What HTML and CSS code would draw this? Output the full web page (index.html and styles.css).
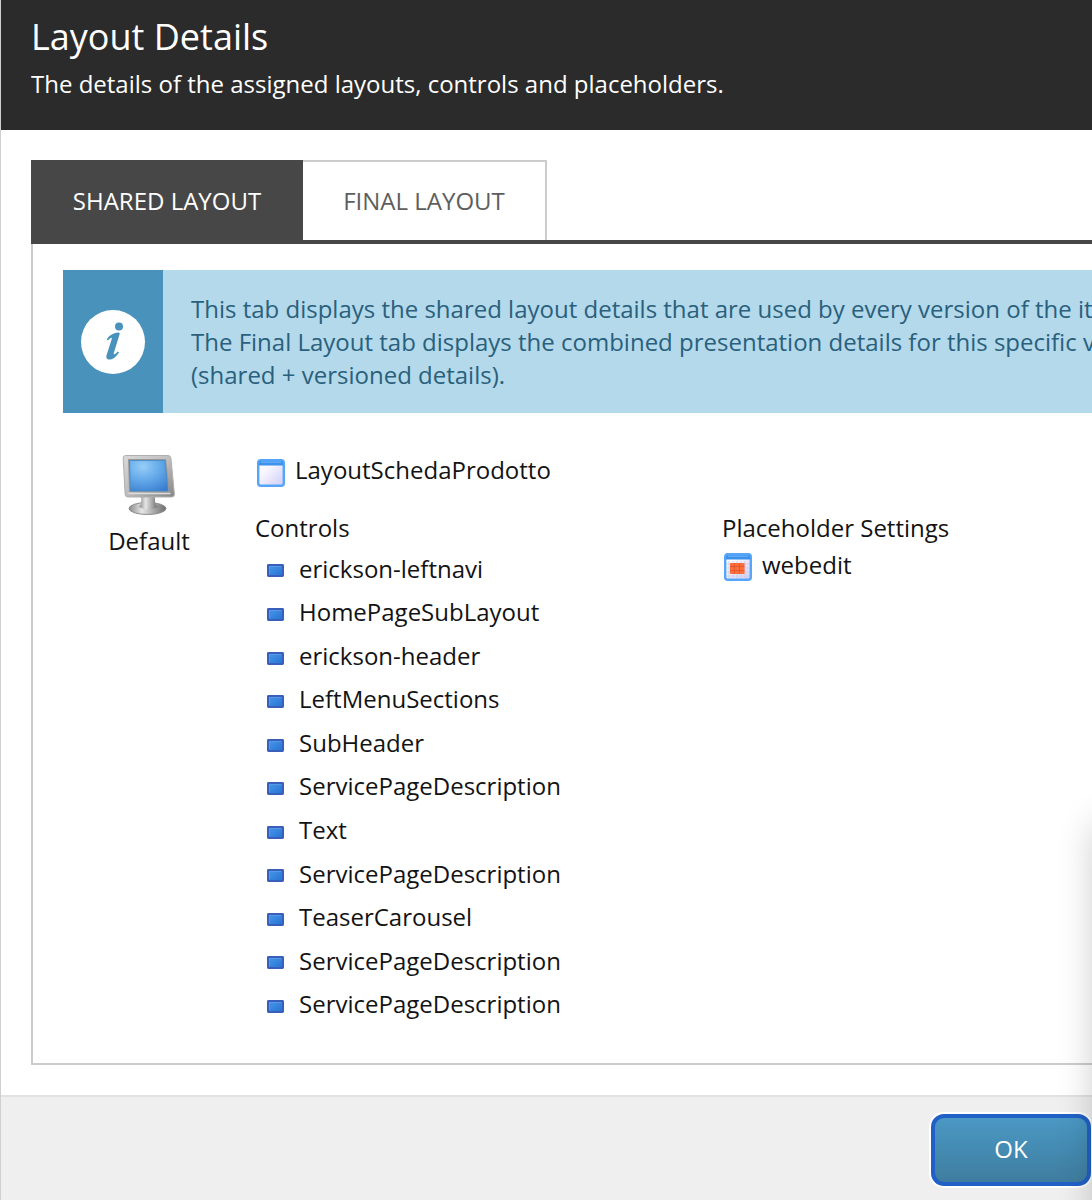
FILE: index.html
```html
<!DOCTYPE html>
<html lang="en">
<head>
<meta charset="utf-8">
<title>Layout Details</title>
<link rel="stylesheet" href="styles.css">
</head>
<body>
<svg class="defs" width="0" height="0" aria-hidden="true">
  <defs>
    <radialGradient id="screen" cx=".35" cy=".2" r="1"><stop offset="0" stop-color="#96cef8"/><stop offset=".45" stop-color="#64a9e9"/><stop offset="1" stop-color="#3277cc"/></radialGradient>
    <linearGradient id="metal" x1="0" y1="0" x2="1" y2="1"><stop offset="0" stop-color="#d9d9d9"/><stop offset=".5" stop-color="#bdbdbd"/><stop offset="1" stop-color="#858585"/></linearGradient>
    <linearGradient id="foot" x1="0" y1="0" x2="1" y2="0"><stop offset="0" stop-color="#8a8a8a"/><stop offset=".35" stop-color="#e6e6e6"/><stop offset="1" stop-color="#6c6c6c"/></linearGradient>
    <linearGradient id="pane" x1="0" y1="0" x2="1" y2="1"><stop offset="0" stop-color="#fff"/><stop offset=".35" stop-color="#f7f6ff"/><stop offset="1" stop-color="#cfccf6"/></linearGradient>
    <linearGradient id="chip" x1="0" y1="0" x2="1" y2="1"><stop offset="0" stop-color="#4a98ea"/><stop offset="1" stop-color="#2472d2"/></linearGradient>
    <symbol id="control" viewBox="0 0 17 13"><rect x="1" y="1" width="15" height="11" rx=".4" fill="url(#chip)" stroke="#3a5fbb" stroke-width="2"/><path d="M2.500 10V2.500H14" fill="none" stroke="#5a9ce8" stroke-width=".8"/></symbol>
    <symbol id="window" viewBox="0 0 28 28"><rect x="1.200" y="1.200" width="25.600" height="25.600" rx="2.600" fill="url(#pane)" stroke="#55a5fa" stroke-width="2.400"/><path d="M2 6.500V3.500Q2 2 3.500 2h21Q26 2 26 3.500v3z" fill="#3e91ea"/><path d="M4 3.200h20" stroke="#67b1fb" stroke-width="1.300"/></symbol>
  </defs>
</svg>
<div class="dialog">
  <header class="header">
    <h1 class="title">Layout Details</h1>
    <p class="subtitle">The details of the assigned layouts, controls and placeholders.</p>
  </header>
  <main class="main">
    <nav class="tabs">
      <a class="tab tab-active">SHARED LAYOUT</a>
      <a class="tab">FINAL LAYOUT</a>
    </nav>
    <section class="panel">
      <div class="notice">
        <div class="notice-side">
          <span class="notice-icon"><svg width="64" height="64" viewBox="0 0 64 64"><circle cx="38" cy="16.500" r="4" fill="#4892bb"/><path d="M25.800 29.500C28 25 33 22.600 37.500 22.400 38.800 22.600 38.900 23.500 38.500 24.500L32.800 43C32.200 45 33.600 45 36.800 41.500L38 42.500C35.200 47.200 31.700 49.600 28.500 49.600 25.600 49.600 24.800 47.500 25.600 45L30.600 29.500C31.400 26.800 29.800 27.200 27 30.500Z" fill="#4892bb"/></svg></span>
        </div>
        <p class="notice-text">This tab displays the shared layout details that are used by every version of the item.<br>The Final Layout tab displays the combined presentation details for this specific version<br>(shared + versioned details).</p>
      </div>
      <div class="details">
        <div class="device">
          <svg class="monitor" width="54" height="62" viewBox="0 0 54 62">
            <ellipse cx="25.500" cy="54.500" rx="18.500" ry="6" fill="url(#foot)" stroke="#8b8b8b"/>
            <path d="M18 43h15v4q0 4 3 6-9 5-19 0 3-3 2-10z" fill="url(#foot)"/>
            <path d="M3.500 1.500h42.500q2.500 0 2.900 2.500l3.500 36q.2 3-2.600 3H6q-2.800 0-2.900-3L1.200 4Q1.100 1.500 3.500 1.500z" fill="url(#metal)" stroke="#b0b0b0"/>
            <path d="M6 5h38l3.700 33H7z" fill="#999"/>
            <path d="M7.500 6.500h35.500l3 30.500H8.500z" fill="url(#screen)" stroke="#4688c8" stroke-width=".8"/>
            <path d="M6.500 39.500h42" stroke="#dcdcdc" stroke-width="1.500"/>
          </svg>
          <span>Default</span>
        </div>
        <div class="layout">
          <div class="layout-name"><svg width="28" height="28"><use href="#window"/></svg><span>LayoutSchedaProdotto</span></div>
          <div class="columns">
            <div class="controls">
              <h2 class="heading">Controls</h2>
              <ul class="control-list">
                <li><svg width="17" height="13"><use href="#control"/></svg>erickson-leftnavi</li>
                <li><svg width="17" height="13"><use href="#control"/></svg>HomePageSubLayout</li>
                <li><svg width="17" height="13"><use href="#control"/></svg>erickson-header</li>
                <li><svg width="17" height="13"><use href="#control"/></svg>LeftMenuSections</li>
                <li><svg width="17" height="13"><use href="#control"/></svg>SubHeader</li>
                <li><svg width="17" height="13"><use href="#control"/></svg>ServicePageDescription</li>
                <li><svg width="17" height="13"><use href="#control"/></svg>Text</li>
                <li><svg width="17" height="13"><use href="#control"/></svg>ServicePageDescription</li>
                <li><svg width="17" height="13"><use href="#control"/></svg>TeaserCarousel</li>
                <li><svg width="17" height="13"><use href="#control"/></svg>ServicePageDescription</li>
                <li><svg width="17" height="13"><use href="#control"/></svg>ServicePageDescription</li>
              </ul>
            </div>
            <div class="placeholders">
              <h2 class="heading">Placeholder Settings</h2>
              <div class="placeholder"><svg width="28" height="28" viewBox="0 0 28 28"><use href="#window"/><path d="M5 8v17M9 8v17M13 8v17M17 8v17M21 8v17M3 11h22M3 15h22M3 19h22M3 23h22" stroke="#c9c9ea" stroke-width=".8"/><rect x="6" y="10" width="14.500" height="11" fill="#fb6e3e"/><path d="M10.500 10v11M15.500 10v11M6 13.500h14.500M6 17.500h14.500" stroke="#e4562c" stroke-width=".9"/></svg><span>webedit</span></div>
            </div>
          </div>
        </div>
      </div>
    </section>
  </main>
  <footer class="footer"><button class="ok">OK</button></footer>
  <div class="side-shadow"></div>
</div>
</body>
</html>
```
FILE: styles.css
```css
* { box-sizing: border-box; }
body, h1, h2, p, ul { margin: 0; padding: 0; }
body {
  height: 1200px;
  overflow: hidden;
  background: #fff;
  color: #131313;
  font: 24px/33px "Open Sans", sans-serif;
}
svg { display: block; flex: none; }
.defs { position: absolute; }
.dialog {
  position: relative;
  display: flex;
  flex-direction: column;
  height: 1200px;
  overflow: hidden;
  border-left: 1px solid #d0d0d0;
}
.header {
  height: 130px;
  padding: 12px 30px 0;
  background: #2b2b2b;
  color: #fff;
}
.title { font-size: 36px; line-height: 50px; font-weight: 400; }
.subtitle { margin-top: 5px; white-space: nowrap; }
.main { height: 965px; padding: 30px 0 30px 30px; display: flex; flex-direction: column; }
.tabs { display: flex; height: 84px; border-bottom: 4px solid #474747; }
.tab {
  width: 244px;
  height: 80px;
  padding-top: 22px;
  border: solid #ccc;
  border-width: 2px 2px 0 0;
  color: #5e5e5e;
  text-align: center;
}
.tab-active { width: 272px; padding-top: 24px; border: 0; background: #474747; color: #fff; }
.panel {
  flex: 1;
  padding: 26px 0 0 30px;
  border: solid #ccc;
  border-width: 0 0 2px 2px;
}
.notice { display: flex; height: 143px; background: #b3d9eb; color: #2a607c; overflow: hidden; }
.notice-side {
  display: flex;
  flex: none;
  width: 100px;
  align-items: center;
  justify-content: center;
  background: #4892bb;
}
.notice-icon { width: 64px; height: 64px; border-radius: 50%; background: #fff; }
.notice-text { padding: 22px 0 0 28px; white-space: nowrap; }
.details { display: flex; }
.device {
  display: flex;
  flex-direction: column;
  align-items: center;
  width: 172px;
  padding-top: 41px;
}
.device span { margin-top: 8px; }
.layout { flex: 1; padding-top: 40px; margin-left: 20px; }
.layout-name { display: flex; align-items: center; gap: 10px; height: 33px; padding-left: 2px; }
.layout-name svg { margin-top: 6px; }
.columns { display: flex; margin-top: 25px; }
.controls { width: 467px; }
.heading { font-size: 24px; line-height: 33px; font-weight: 400; }
.control-list { margin-top: 2.43px; padding-left: 11.5px; list-style: none; }
.control-list li { display: flex; align-items: center; gap: 15.5px; height: 43.55px; }
.control-list svg { margin-top: 5.5px; }
.placeholder { display: flex; align-items: center; gap: 10px; margin-top: 4px; padding-left: 2px; }
.placeholder svg { margin-top: 4px; }
.footer {
  display: flex;
  flex: 1;
  justify-content: flex-end;
  padding: 17px 1px 0;
  border-top: 2px solid #e2e2e2;
  background: #efefef;
}
.ok {
  width: 160px;
  height: 72px;
  padding: 0 0 3px;
  border: 4px solid #2161c7;
  border-radius: 13px;
  box-shadow: 0 0 0 2px #fff;
  background: linear-gradient(#4a98c4, #3f7d9f);
  color: #fff;
  font: inherit;
}
.side-shadow {
  position: absolute;
  left: 1095px;
  top: 825px;
  width: 100px;
  height: 500px;
  box-shadow: 0 0 38px rgba(0, 0, 0, .23);
}
```
